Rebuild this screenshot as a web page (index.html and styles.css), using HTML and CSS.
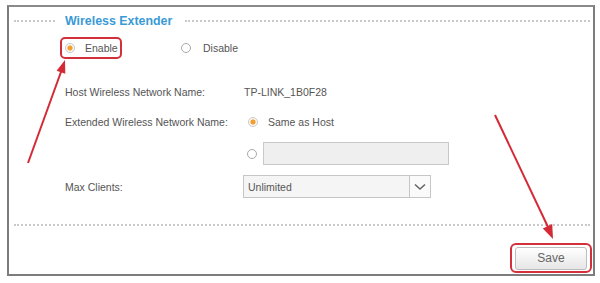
FILE: index.html
```html
<!DOCTYPE html>
<html>
<head>
<meta charset="utf-8">
<link rel="stylesheet" href="styles.css">
</head>
<body>
<div class="frame">
  <div class="header">
    <span class="dots short"></span>
    <span class="title">Wireless Extender</span>
    <span class="dots long"></span>
  </div>
  <div class="mode-row">
    <label class="opt highlight"><span class="radio on"></span><span>Enable</span></label>
    <label class="opt disable"><span class="radio"></span><span>Disable</span></label>
  </div>
  <div class="form">
    <div class="lbl">Host Wireless Network Name:</div>
    <div class="val host">TP-LINK_1B0F28</div>
    <div class="lbl">Extended Wireless Network Name:</div>
    <div class="val ext"><span class="radio on"></span><span>Same as Host</span></div>
    <div class="lbl"></div>
    <div class="val custom"><span class="radio"></span><span class="textbox"></span></div>
    <div class="lbl">Max Clients:</div>
    <div class="val">
      <div class="select"><span class="sel-text">Unlimited</span><span class="sel-btn"><svg width="12" height="8" viewBox="0 0 12 8"><path d="M1 1.5 L6 6 L11 1.5" fill="none" stroke="#666" stroke-width="1.6"/></svg></span></div>
    </div>
  </div>
  <div class="divider"></div>
  <div class="footer">
    <div class="save-ring"><button class="save">Save</button></div>
  </div>
</div>
<svg class="arrows" width="600" height="283" viewBox="0 0 600 283">
  <line x1="28" y1="163" x2="61.5" y2="70.5" stroke="#d42a36" stroke-width="2"/>
  <polygon points="65,60 65.3,73.8 56.6,70.8" fill="#d42a36"/>
  <line x1="495" y1="115" x2="548" y2="227" stroke="#d42a36" stroke-width="2"/>
  <polygon points="553,239 542.8,228.6 552.2,224" fill="#d42a36"/>
</svg>
</body>
</html>
```
FILE: styles.css
```css
html, body {
  margin: 0;
  padding: 0;
  background: #fff;
}
body {
  width: 600px;
  height: 283px;
  position: relative;
  overflow: hidden;
  font-family: "Liberation Sans", Arial, sans-serif;
  font-size: 10.5px;
  color: #555;
}
.frame {
  box-sizing: border-box;
  margin: 5px 0 0 7px;
  width: 588px;
  height: 271px;
  border: 2px solid #7d7d7d;
  border-top-color: #8a8a8a;
}
.header {
  display: flex;
  align-items: center;
  height: 16px;
  margin-top: 6px;
  padding-left: 5px;
}
.dots {
  display: block;
  height: 0;
  border-top: 2px dotted #c9c9c9;
}
.dots.short { width: 41px; }
.dots.long { flex: 1; margin-right: 3px; }
.title {
  font-size: 12.4px;
  font-weight: bold;
  color: #3a9ad6;
  margin: 0 13px 0 10px;
}
.mode-row {
  display: flex;
  align-items: center;
  margin-top: 8px;
  height: 22px;
  padding-left: 51px;
}
.opt {
  display: flex;
  align-items: center;
  gap: 10px;
  box-sizing: border-box;
  height: 22px;
}
.highlight {
  border: 2px solid #d4303c;
  border-radius: 5px;
  padding: 0 4px 0 3px;
  width: 62px;
}
.disable {
  margin-left: 59px;
  gap: 12px;
}
.radio {
  display: inline-block;
  box-sizing: border-box;
  width: 10px;
  height: 10px;
  border: 1px solid #a9a9a9;
  border-radius: 50%;
  background: #fff;
  flex: none;
}
.radio.on {
  border-color: #c8c8c8;
  background: radial-gradient(circle, #f0a030 0 2.2px, #fbe9d0 2.8px, #fff 4px);
}
.form {
  display: grid;
  grid-template-columns: 178px 1fr;
  grid-template-rows: 20px 20px 23px 23px;
  row-gap: 10px;
  margin-top: 23px;
  padding-left: 56px;
}
.lbl, .val {
  display: flex;
  align-items: center;
}
.val.host { padding-left: 1px; }
.val.ext { padding-left: 5px; gap: 10px; }
.val.custom { padding-left: 4px; gap: 6px; }
.textbox {
  display: block;
  box-sizing: border-box;
  width: 186px;
  height: 23px;
  background: #efefef;
  border: 1px solid #c9c9c9;
}
.select {
  display: flex;
  box-sizing: border-box;
  width: 188px;
  height: 23px;
  border: 1px solid #c6c6c6;
  background: #f5f5f5;
}
.sel-text {
  flex: 1;
  display: flex;
  align-items: center;
  padding-left: 4px;
  color: #555;
}
.sel-btn {
  width: 20px;
  border-left: 1px solid #c6c6c6;
  display: flex;
  align-items: center;
  justify-content: center;
  background: #fafafa;
}
.divider {
  margin: 26px 3px 0 5px;
  border-top: 2px dotted #c9c9c9;
}
.footer {
  display: flex;
  justify-content: flex-end;
  margin-top: 17px;
  padding-right: 1px;
}
.save-ring {
  box-sizing: border-box;
  width: 82px;
  height: 30px;
  border: 2px solid #d4303c;
  border-radius: 6px;
  display: flex;
  align-items: center;
  justify-content: center;
}
.save {
  box-sizing: border-box;
  width: 72px;
  height: 23px;
  border: 1px solid #bdbdbd;
  border-radius: 3px;
  background: linear-gradient(#ffffff, #e6e6e6);
  font-family: "Liberation Sans", Arial, sans-serif;
  font-size: 12px;
  color: #666;
  padding: 0;
}
.arrows {
  position: absolute;
  left: 0;
  top: 0;
  pointer-events: none;
}
```
